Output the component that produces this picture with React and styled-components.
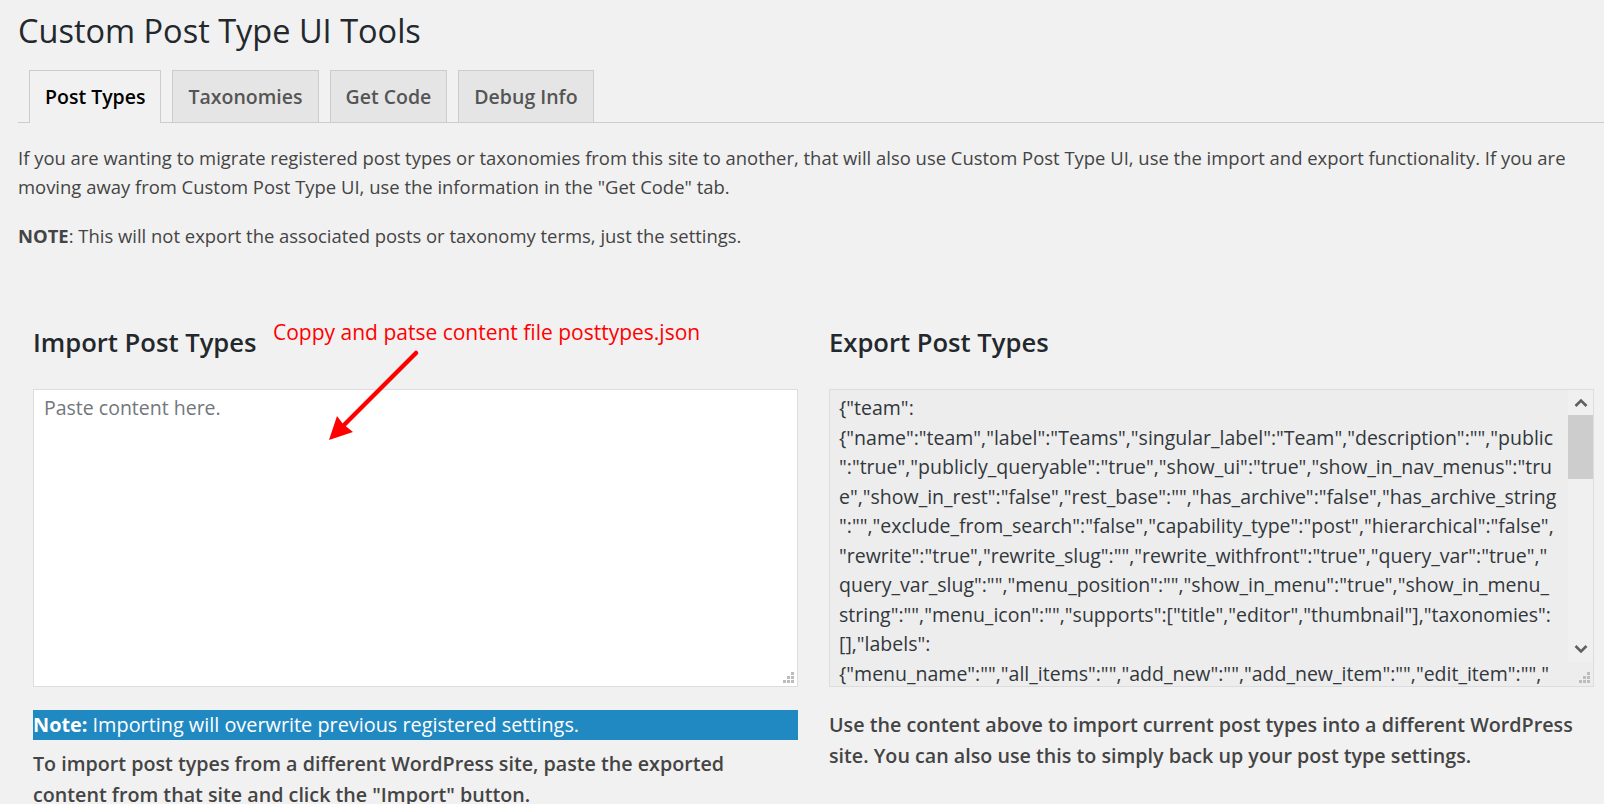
import React from 'react';
import styled, { createGlobalStyle } from 'styled-components';

const GlobalStyle = createGlobalStyle`
  html, body {
    margin: 0;
    padding: 0;
    background: #f1f1f1;
  }
  body {
    font-family: "Open Sans", "Noto Sans", sans-serif;
    color: #444;
    overflow: hidden;
  }
`;

// Page wrapper
const Wrap = styled.div`
  padding: 0 0 0 18px;
  width: 1586px;
  height: 804px;
  overflow: hidden;
`;

const Title = styled.h1`
  margin: 0;
  padding-top: 9px;
  font-size: 32.5px;
  line-height: 44px;
  font-weight: 400;
  color: #23282d;
`;

// Tab bar
const TabBar = styled.nav`
  display: flex;
  gap: 11px;
  margin-top: 17px;
  padding-left: 11px;
  border-bottom: 1px solid #ccc;
`;

const Tab = styled.a`
  display: block;
  height: 51px;
  line-height: 51px;
  padding: 0 15px;
  border: 1px solid #ccc;
  border-bottom: none;
  margin-bottom: ${(p) => (p.$active ? '-1px' : '0')};
  padding-bottom: ${(p) => (p.$active ? '1px' : '0')};
  background: ${(p) => (p.$active ? '#f1f1f1' : '#e5e5e5')};
  color: ${(p) => (p.$active ? '#000' : '#555')};
  font-size: 19.5px;
  font-weight: 600;
  text-decoration: none;
`;

const Para = styled.p`
  margin: 20px 0 0;
  font-size: 18.45px;
  line-height: 29px;
  color: #444;
  white-space: nowrap;
`;

// Two columns for import / export
const Columns = styled.div`
  display: grid;
  grid-template-columns: 765px 765px;
  column-gap: 31px;
  margin-top: 76px;
  padding-left: 15px;
`;

const Column = styled.section`
  position: relative;
`;

const Heading = styled.h2`
  margin: 0 0 29px;
  font-size: 25.6px;
  line-height: 34px;
  font-weight: 600;
  color: #23282d;
`;

const Annotation = styled.span`
  position: absolute;
  z-index: 2;
  left: 240px;
  top: -8px;
  font-size: 21px;
  line-height: 28px;
  color: #ff0000;
  white-space: nowrap;
`;

const Arrow = styled.svg`
  position: absolute;
  z-index: 2;
  left: 290px;
  top: 20px;
  overflow: visible;
`;

const Field = styled.div`
  position: relative;
`;

const ImportArea = styled.textarea`
  display: block;
  box-sizing: border-box;
  width: 765px;
  height: 298px;
  margin: 0;
  padding: 3px 10px;
  border: 1px solid #ddd;
  background: #fff;
  font-family: inherit;
  font-size: 19.5px;
  line-height: 29px;
  color: #32373c;
  outline: none;
  resize: none;
  &::placeholder {
    color: #72777c;
  }
`;

const CornerGrip = styled.div`
  position: absolute;
  right: 4px;
  bottom: 4px;
  line-height: 0;
`;

const ExportBox = styled.div`
  display: flex;
  box-sizing: border-box;
  width: 765px;
  height: 298px;
  border: 1px solid #ddd;
  background: #ededed;
`;

const ExportText = styled.div`
  flex: 1;
  overflow: hidden;
  padding: 3px 0 0 9px;
  font-size: 19.5px;
  line-height: 29.5px;
  color: #32373c;
`;

const CodeLine = styled.div`
  white-space: nowrap;
`;

const ScrollColumn = styled.div`
  display: flex;
  flex-direction: column;
  width: 25px;
`;

const Track = styled.div`
  display: flex;
  flex-direction: column;
  align-items: center;
  height: 272px;
  background: #f0f0f0;
`;

const ScrollButton = styled.div`
  display: flex;
  align-items: center;
  justify-content: center;
  height: 25px;
  width: 25px;
`;

const Thumb = styled.div`
  width: 25px;
  height: 64px;
  background: #cdcdcd;
`;

const Spacer = styled.div`
  flex: 1;
`;

const Grip = styled.div`
  flex: 1;
  display: flex;
  align-items: flex-end;
  justify-content: flex-end;
  padding: 0 3px 3px 0;
`;

const NoteBar = styled.div`
  margin-top: 23px;
  height: 30px;
  line-height: 30px;
  background: #2189c2;
  color: #fff;
  font-size: 19.85px;
  white-space: nowrap;
  strong {
    font-weight: 700;
  }
`;

const Help = styled.p`
  margin: ${(p) => (p.$gap ? p.$gap : '8px')} 0 0;
  font-size: 19.7px;
  line-height: 31px;
  font-weight: 600;
  color: #444;
  white-space: nowrap;
`;

const Chevron = ({ up }) => (
  <svg width="14" height="9" viewBox="0 0 14 9">
    <path
      d={up ? 'M1.5 8 L7 2.5 L12.5 8' : 'M1.5 1 L7 6.5 L12.5 1'}
      fill="none"
      stroke="#606060"
      strokeWidth="2.6"
    />
  </svg>
);

const GripDots = () => (
  <svg width="11" height="11" viewBox="0 0 11 11">
    {[
      [8, 0],
      [4, 4],
      [8, 4],
      [0, 8],
      [4, 8],
      [8, 8],
    ].map(([x, y]) => (
      <rect key={`${x}-${y}`} x={x} y={y} width="3" height="3" fill="#bcbcbc" />
    ))}
  </svg>
);

const exportLines = [
  '{"team":',
  '{"name":"team","label":"Teams","singular_label":"Team","description":"","public',
  '":"true","publicly_queryable":"true","show_ui":"true","show_in_nav_menus":"tru',
  'e","show_in_rest":"false","rest_base":"","has_archive":"false","has_archive_string',
  '":"","exclude_from_search":"false","capability_type":"post","hierarchical":"false",',
  '"rewrite":"true","rewrite_slug":"","rewrite_withfront":"true","query_var":"true","',
  'query_var_slug":"","menu_position":"","show_in_menu":"true","show_in_menu_',
  'string":"","menu_icon":"","supports":["title","editor","thumbnail"],"taxonomies":',
  '[],"labels":',
  '{"menu_name":"","all_items":"","add_new":"","add_new_item":"","edit_item":"","',
];

const tabs = ['Post Types', 'Taxonomies', 'Get Code', 'Debug Info'];

export default function App() {
  return (
    <>
      <GlobalStyle />
      <Wrap>
        <Title>Custom Post Type UI Tools</Title>
        <TabBar>
          {tabs.map((t, i) => (
            <Tab key={t} href="#" $active={i === 0}>
              {t}
            </Tab>
          ))}
        </TabBar>
        <Para>
          If you are wanting to migrate registered post types or taxonomies from this site to another, that will also use
          Custom Post Type UI, use the import and export functionality. If you are
          <br />
          moving away from Custom Post Type UI, use the information in the "Get Code" tab.
        </Para>
        <Para>
          <strong>NOTE</strong>: This will not export the associated posts or taxonomy terms, just the settings.
        </Para>

        <Columns>
          <Column>
            <Heading>Import Post Types</Heading>
            <Annotation>Coppy and patse content file posttypes.json</Annotation>
            <Arrow width="100" height="100" viewBox="0 0 100 100">
              <line x1="93" y1="7" x2="18" y2="82" stroke="#ff0000" strokeWidth="4.5" strokeLinecap="round" />
              <polygon points="6,94 14,70 20,78 30,86" fill="#ff0000" />
            </Arrow>
            <Field>
              <ImportArea placeholder="Paste content here." />
              <CornerGrip>
                <GripDots />
              </CornerGrip>
            </Field>
            <NoteBar>
              <strong>Note:</strong> Importing will overwrite previous registered settings.
            </NoteBar>
            <Help>
              To import post types from a different WordPress site, paste the exported
              <br />
              content from that site and click the "Import" button.
            </Help>
          </Column>

          <Column>
            <Heading>Export Post Types</Heading>
            <ExportBox>
              <ExportText>
                {exportLines.map((l, i) => (
                  <CodeLine key={i}>{l}</CodeLine>
                ))}
              </ExportText>
              <ScrollColumn>
                <Track>
                  <ScrollButton>
                    <Chevron up />
                  </ScrollButton>
                  <Thumb />
                  <Spacer />
                  <ScrollButton>
                    <Chevron />
                  </ScrollButton>
                </Track>
                <Grip>
                  <GripDots />
                </Grip>
              </ScrollColumn>
            </ExportBox>
            <Help $gap="22px">
              Use the content above to import current post types into a different WordPress
              <br />
              site. You can also use this to simply back up your post type settings.
            </Help>
          </Column>
        </Columns>
      </Wrap>
    </>
  );
}
